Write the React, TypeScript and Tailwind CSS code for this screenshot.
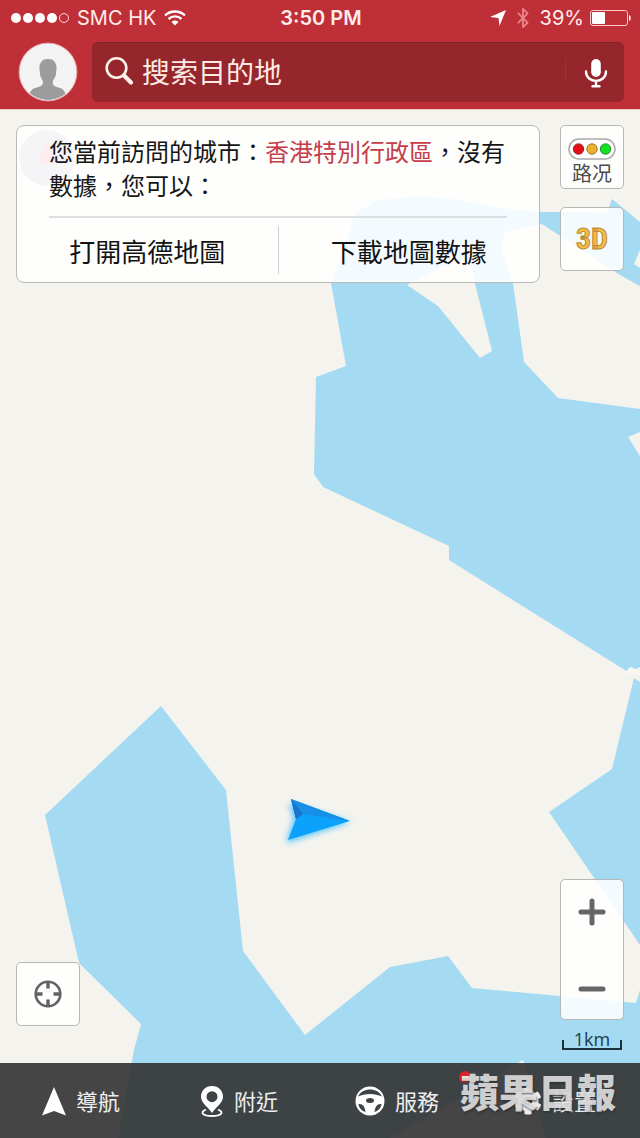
import { useState } from "react";
import { Bluetooth } from "lucide-react";
import { FaCog } from "react-icons/fa";

const WATER = [
  "331,283 343,250 356,212 378,200 420,196 462,200 500,208 542,212 590,212 607,213 612,199 640,222 640,286 620,275 542,224 505,232 501,246 513,283 524,362 558,398 640,409 640,667 628,672 449,560 449,546 323,487 314,474 316,377 346,366",
  "634,678 640,682 640,945 549,812 612,769",
  "161,706 226,790 243,951 305,1035 390,967 448,956 472,988 636,1003 640,990 640,1138 118,1138 134,1050 141,1024 79,963 45,815",
];

const LAND = [
  "407,285 452,262 470,264 492,351 480,358 438,306",
  "628,437 640,432 640,456",
  "634,264 640,250 640,268",
  "390,1138 440,1110 523,1060 545,1138",
];

function MapCanvas() {
  return (
    <svg
      className="absolute inset-0 h-full w-full"
      viewBox="0 0 640 1138"
      preserveAspectRatio="xMidYMid slice"
      aria-hidden="true"
    >
      <defs>
        <filter id="glow" x="-30%" y="-30%" width="160%" height="160%">
          <feGaussianBlur stdDeviation="3" />
        </filter>
      </defs>
      <rect width="640" height="1138" fill="#f5f3ee" />
      {WATER.map((points) => (
        <polygon key={points} points={points} fill="#a4dbf3" />
      ))}
      {LAND.map((points) => (
        <polygon key={points} points={points} fill="#f5f3ee" />
      ))}
      <path d="M626 674L631 669L640 675" fill="none" stroke="#f8f7f3" strokeWidth="4" />

      {/* Compass */}
      <circle cx="47" cy="158" r="28" fill="#7c7ca0" fillOpacity="0.6" />
      <path d="M47 138L56 164H38Z" fill="#ff6070" />

      {/* Current position */}
      <path d="M289 803L350 822L286 843L294 819Z" fill="#4cc4ff" filter="url(#glow)" />
      <path d="M291 799L350 821L288 840L296 819Z" fill="#0ca2fb" />
      <path d="M291 799L350 821L303 814L296 819Z" fill="#178fe6" />
      <path d="M291 799L303 814L296 819Z" fill="#1a74cc" />
    </svg>
  );
}

function StatusBar() {
  return (
    <div className="grid h-9 grid-cols-3 items-center pr-[9px] pl-[11px] font-['Inter','Liberation_Sans',sans-serif] text-xl text-[#ffecea]">
      <div className="flex items-center gap-2">
        <div className="flex gap-[2px]">
          {[0, 1, 2, 3].map((i) => (
            <span key={i} className="h-2.5 w-2.5 rounded-full bg-white" />
          ))}
          <span className="h-2.5 w-2.5 rounded-full border border-[#ffdcda]" />
        </div>
        <span className="whitespace-nowrap">SMC HK</span>
        <svg className="h-4 w-[22px]" viewBox="0 0 22 16" fill="none" stroke="#fff" strokeWidth="2.4">
          <path d="M1 5.5C6.5 .2 15.500 .2 21 5.5" />
          <path d="M4.500 9C8.300 5.500 13.700 5.500 17.500 9" />
          <path d="M11 15.500L7.500 12C9.500 10 12.500 10 14.500 12Z" fill="#fff" stroke="none" />
        </svg>
      </div>
      <span className="text-center font-semibold whitespace-nowrap">3:50 PM</span>
      <div className="flex items-center justify-end gap-1.5">
        <svg className="h-4 w-4" viewBox="0 0 16 16" fill="#fff">
          <path d="M16 0L9.500 16L8.500 8L0 7Z" />
        </svg>
        <Bluetooth className="h-[22px] w-[22px] text-[#ea8488]" strokeWidth={2} />
        <span>39%</span>
        <svg className="h-4 w-[41px]" viewBox="0 0 41 16">
          <rect x=".5" y=".5" width="37" height="15" rx="2.500" fill="none" stroke="#ffc9c8" />
          <rect x="2" y="2" width="13" height="12" rx="1" fill="#fff" />
          <path d="M39 5C41.300 5.500 41.300 10.500 39 11Z" fill="#fff" />
        </svg>
      </div>
    </div>
  );
}

function SearchBar() {
  return (
    <div className="flex gap-[14px] pt-1.5 pr-4 pb-[7px] pl-[18px]">
      <button type="button" aria-label="Profile">
        <svg className="h-[60px] w-[60px]" viewBox="0 0 60 60">
          <defs>
            <clipPath id="avatar">
              <circle cx="30" cy="30" r="28" />
            </clipPath>
          </defs>
          <circle cx="30" cy="30" r="29" fill="#f3f3f3" stroke="#e49a9e" />
          <g clipPath="url(#avatar)" fill="#9c9c9c">
            <path d="M30 17C36 17 39 21 38.500 27L38 32C37.500 36 35 37.500 34.800 40C34.600 44 37 44.500 42 46C46 47.500 48 50 49 60H10C11 50 13 47.500 17 46C22 44.500 25 44 25 40C24.800 37.500 22.500 36 22 32L21.500 27C21 21 24 17 30 17Z" />
          </g>
        </svg>
      </button>
      <div className="flex h-[60px] min-w-0 flex-1 items-center rounded-md border-t border-[#80222a] bg-[#95262b] pr-4 pb-1 pl-3">
        <svg className="h-[30px] w-[30px] shrink-0" viewBox="0 0 30 30" fill="none" stroke="#fff3ee">
          <circle cx="12.500" cy="12" r="9.800" strokeWidth="2.600" />
          <path d="M20 19.500L27 26.500" strokeWidth="4.200" strokeLinecap="round" />
        </svg>
        <input
          type="search"
          aria-label="搜索目的地"
          placeholder="搜索目的地"
          className="ml-2 min-w-0 flex-1 bg-transparent text-[28px] text-white outline-none placeholder:text-[#fdeae4]"
        />
        <span className="h-6 w-px bg-[#a92d33]" />
        <button type="button" aria-label="Voice search" className="ml-[18px] pt-1">
          <svg className="h-[30px] w-6" viewBox="0 0 24 30" fill="none" stroke="#fff" strokeWidth="2.400" strokeLinecap="round">
            <rect x="7.200" y="1" width="9.600" height="18" rx="4.800" fill="#fff" stroke="none" />
            <path d="M2 13.500C2 26 22 26 22 13.500M12 23V28M8.500 28.300H15.500" />
          </svg>
        </button>
      </div>
    </div>
  );
}

function CityNotice() {
  return (
    <section className="min-w-0 flex-1 rounded-lg border border-[#b9bbb9] bg-white/88">
      <div className="mx-8 border-b-2 border-[#dcdfe1] pt-2 pb-[14px]">
        <p className="text-2xl leading-[34px] text-[#161616]">
          您當前訪問的城市：<span className="text-[#c53d4b]">香港特別行政區</span>，沒有數據，您可以：
        </p>
      </div>
      <div className="flex h-16 items-center text-[26px] text-[#121212]">
        <button type="button" className="flex-1">
          打開高德地圖
        </button>
        <span className="h-12 w-px bg-[#cbcdcd]" />
        <button type="button" className="flex-1">
          下載地圖數據
        </button>
      </div>
    </section>
  );
}

const tile =
  "flex h-16 w-16 flex-col items-center justify-center rounded-[5px] border border-[#b7b7b5] bg-white/88";

function NavIcon({ name }: { name: string }) {
  if (name === "navigate") {
    return (
      <svg className="h-[30px] w-6" viewBox="0 0 24 30" fill="#fff">
        <path d="M12 1L24 29.500L12 25L0 29.500Z" />
      </svg>
    );
  }
  if (name === "nearby") {
    return (
      <svg className="h-8 w-6" viewBox="0 0 24 32" fill="none">
        <path d="M6 24.500C-1 27.500 3 31 12 31C21 31 25 27.500 18 24.500" stroke="#fff" strokeWidth="1.800" />
        <path
          d="M12 1C5.500 1 1 5.600 1 11.800C1 18 8 22 12 28C16 22 23 18 23 11.800C23 5.600 18.500 1 12 1ZM12 6.200A5.500 5.500 0 1 1 12 17.200A5.500 5.500 0 1 1 12 6.200Z"
          fill="#fff"
          fillRule="evenodd"
        />
      </svg>
    );
  }
  if (name === "service") {
    return (
      <svg className="h-[30px] w-[30px]" viewBox="0 0 30 30">
        <circle cx="15" cy="15" r="14.500" fill="#fff" />
        <path d="M3 10.500C7 1 23 1 27 10.500C20 7 10 7 3 10.500Z" fill="#404345" />
        <ellipse cx="15" cy="14.500" rx="4" ry="2.500" fill="#404345" />
        <path d="M3.500 18C8 17.500 10 21 10.500 26C7 25 3.800 22 3.500 18ZM26.500 18C22 17.500 20 21 19.500 26C23 25 26.200 22 26.500 18Z" fill="#404345" />
      </svg>
    );
  }
  return <FaCog className="h-7 w-7" />;
}

const TABS = [
  { icon: "navigate", label: "導航" },
  { icon: "nearby", label: "附近" },
  { icon: "service", label: "服務" },
  { icon: "settings", label: "設置" },
];

export default function App() {
  const [traffic, setTraffic] = useState(false);

  return (
    <div
      lang="zh-Hant"
      className="relative flex min-h-screen flex-col overflow-hidden font-['Noto_Sans_CJK_TC','Noto_Sans_CJK_SC',sans-serif]"
    >
      <MapCanvas />

      <header className="relative border-b border-[#f5cbc8] bg-[#bf2f37]">
        <StatusBar />
        <SearchBar />
      </header>

      <main className="relative flex flex-1 flex-col justify-between pt-[15px] pr-4 pb-[13px] pl-4">
        <div className="flex items-start gap-5">
          <CityNotice />
          <div className="flex flex-col gap-[18px]">
            <button type="button" aria-pressed={traffic} onClick={() => setTraffic(!traffic)} className={`${tile} pt-2`}>
              <svg className="h-6 w-12" viewBox="0 0 48 24">
                <rect x="1" y="2" width="46" height="20" rx="10" fill="#fff" stroke="#a9a9a9" strokeWidth="1.500" />
                <circle cx="10.500" cy="12" r="5.200" fill="#e80c18" stroke="#8d2a2c" />
                <circle cx="24" cy="12" r="5.200" fill="#ecb02b" stroke="#98742c" />
                <circle cx="37.500" cy="12" r="5.200" fill="#10e420" stroke="#2c8935" />
              </svg>
              <span lang="zh-Hans" className="font-['Noto_Sans_CJK_SC',sans-serif] text-xl leading-6 text-[#4b4b4b]">
                路况
              </span>
            </button>
            <button type="button" className={tile}>
              <span className="font-['Liberation_Sans_Narrow','Roboto_Condensed','DejaVu_Sans_Condensed',sans-serif] text-[30px] leading-8 font-bold text-[#f2bc42] [-webkit-text-stroke:1px_#b98b3b]">
                3D
              </span>
            </button>
          </div>
        </div>

        <div className="flex items-end justify-between">
          <button type="button" aria-label="Locate" className={`${tile} mb-6`}>
            <svg className="h-7 w-7" viewBox="0 0 28 28" fill="none" stroke="#626262">
              <circle cx="14" cy="14" r="12.300" strokeWidth="2.600" />
              <path d="M14 2V8.500M14 19.500V26M2 14H8.500M19.500 14H26" strokeWidth="3.400" />
            </svg>
          </button>
          <div className="flex w-16 flex-col">
            <div className="flex h-[141px] flex-col justify-between rounded-[5px] border border-[#b7b7b5] bg-white/88">
              <button type="button" aria-label="Zoom in" className="flex h-16 items-center justify-center">
                <svg className="h-7 w-7" viewBox="0 0 28 28" stroke="#646669" strokeWidth="5" strokeLinecap="round">
                  <path d="M14 3V25M3 14H25" />
                </svg>
              </button>
              <button type="button" aria-label="Zoom out" className="flex h-[60px] items-center justify-center">
                <svg className="h-7 w-7" viewBox="0 0 28 28" stroke="#646669" strokeWidth="5" strokeLinecap="round">
                  <path d="M3 14H25" />
                </svg>
              </button>
            </div>
            <div className="flex flex-col pt-2.5">
              <span className="text-center font-['Open_Sans','Noto_Sans',sans-serif] text-lg leading-[18px] text-[#1c3a4a]">1km</span>
              <span className="mx-0.5 -mt-2 h-2.5 border-x-2 border-b-2 border-[#1d303b]" />
            </div>
          </div>
        </div>
      </main>

      <nav className="relative grid h-[75px] grid-cols-4 bg-[#323232]/90 pr-1 pl-1 text-[22px] text-[#eeeeee]">
        {TABS.map((tab) => (
          <button key={tab.icon} type="button" className="flex items-center justify-center gap-2.5 pr-1">
            <NavIcon name={tab.icon} />
            {tab.label}
          </button>
        ))}
        <span className="absolute top-2 right-[169px] flex h-3 w-3 items-center justify-center rounded-full bg-[#d9232c]">
          <span className="h-0.5 w-1.5 bg-white" />
        </span>
        <span className="absolute top-1 right-6 text-[39px] leading-[46px] font-black text-[#e4e4e4]/90 [text-shadow:1px_2px_2px_#2a2a2a88]">
          蘋果日報
        </span>
      </nav>
    </div>
  );
}
